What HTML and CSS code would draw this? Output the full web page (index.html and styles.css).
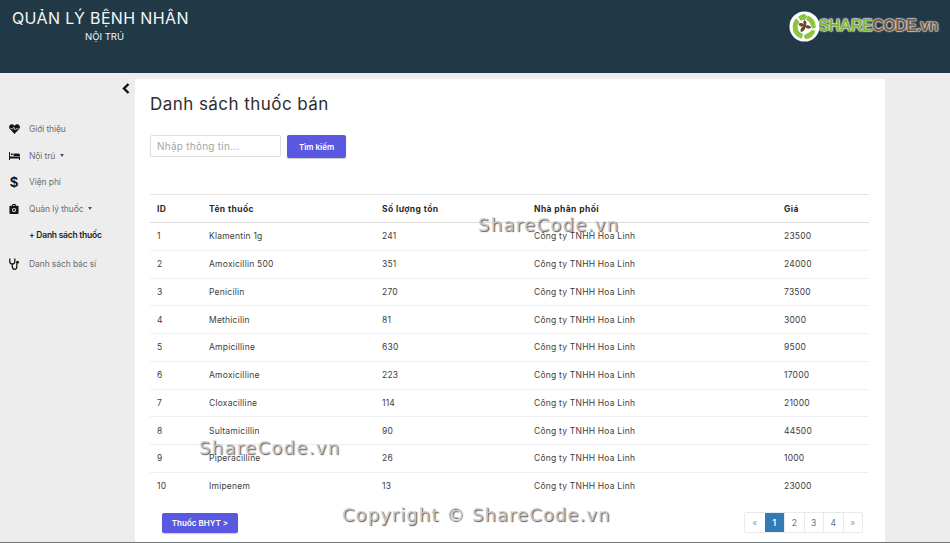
FILE: index.html
```html
<!DOCTYPE html>
<html lang="vi">
<head>
<meta charset="utf-8">
<title>Danh sách thuốc bán</title>
<link rel="stylesheet" href="styles.css">
</head>
<body>
<header class="topbar">
  <div class="brand">
    <div class="brand-title">QUẢN LÝ BỆNH NHÂN</div>
    <div class="brand-sub">NỘI TRÚ</div>
  </div>
  <div class="logo">
    <svg class="logo-mark" width="31" height="31" viewBox="0 0 34 34">
      <circle cx="17" cy="17" r="16.500" fill="#fff"/>
      <path d="M10 6.500A13 13 0 0 1 17 3l3 3-2 3.500a8 8 0 0 0-5 1.500z" fill="#8cc63f"/>
      <path d="M20.500 5a13 13 0 0 1 9 13l-4 1.500-2.500-6a8 8 0 0 0-4-3.500z" fill="#8cc63f"/>
      <path d="M29 22a13 13 0 0 1-11 9l-2-4 4-2.500a8 8 0 0 0 5-4z" fill="#8cc63f"/>
      <path d="M14 30.500A13 13 0 0 1 4 17a13 13 0 0 1 4-9l3.500 4a8 8 0 0 0-2 6 8 8 0 0 0 6 7z" fill="#8cc63f"/>
      <path d="M17 10c2.500 1.500 2.500 4 1.500 6 2.500-1 5-.5 6 2.500-2.500 1.500-5 1-6.500-1 0 3-2 5-5 5.500-1-2.500 0-5 2.500-6-2.500.5-4.500-.5-5-3 2.500-1.500 4.500-.5 6 1-1.500-2-1-3.500.5-5z" fill="#6b4a2c"/>
    </svg>
    <span class="logo-text"><span class="logo-share">SHARE</span><span class="logo-code">CODE.vn</span></span>
  </div>
</header>
<div class="layout">
  <aside class="sidebar">
    <div class="collapse-row">
      <svg width="8" height="11" viewBox="0 0 8 11"><path d="M6.500 1 2 5.500 6.500 10" fill="none" stroke="#111" stroke-width="2.400"/></svg>
    </div>
    <nav class="nav">
      <div class="nav-item">
        <svg class="nav-icon" width="11" height="10" viewBox="0 0 12 11"><path d="M6 11 .8 5.400C-.8 3.400.3.500 3 .3c1.300 0 2.300.7 3 1.700C6.700 1 7.700.3 9 .3c2.700.2 3.800 3.100 2.200 5.100z" fill="#151515"/><path d="M1.500 5.300h2.700l1-1.800 1.300 3 1-1.200h3" fill="none" stroke="#eee" stroke-width=".8"/></svg>
        <span>Giới thiệu</span>
      </div>
      <div class="nav-item">
        <svg class="nav-icon" width="11" height="8" viewBox="0 0 11 8"><path d="M0 0h1v4.500h10V8h-1V6.500H1V8H0zM1.800 2.200a1 1 0 1 1 2 0 1 1 0 0 1-2 0zM4.500 1.500h4.800A1.700 1.700 0 0 1 11 3.200V4H4.500z" fill="#151515"/></svg>
        <span>Nội trú</span><i class="caret"></i>
      </div>
      <div class="nav-item">
        <span class="nav-icon dollar">$</span>
        <span>Viện phí</span>
      </div>
      <div class="nav-item">
        <svg class="nav-icon" width="10" height="10" viewBox="0 0 10 11"><path d="M3 2V.8C3 .3 3.300 0 3.800 0h2.400c.5 0 .8.300.8.800V2h2c.6 0 1 .4 1 1v7c0 .6-.4 1-1 1H1c-.6 0-1-.4-1-1V3c0-.6.4-1 1-1zm1 0h2V1H4z" fill="#151515"/><circle cx="5" cy="6.500" r="2.200" fill="#eee"/><circle cx="5" cy="6.500" r="1.200" fill="#151515"/></svg>
        <span>Quản lý thuốc</span><i class="caret"></i>
      </div>
      <div class="nav-sub">+ Danh sách thuốc</div>
      <div class="nav-item nav-last">
        <svg class="nav-icon" width="11" height="12" viewBox="0 0 11 12"><path d="M.8.500v3C.8 5 2 6 3.300 6s2.500-1 2.500-2.500v-3M3.300 6v2.500c0 1.500 1 2.800 2.300 2.800s2.200-1.200 2.200-2.500V5.500" fill="none" stroke="#151515" stroke-width="1.300"/><circle cx="8.500" cy="4.200" r="1.500" fill="#151515"/></svg>
        <span>Danh sách bác sĩ</span>
      </div>
    </nav>
  </aside>
  <main class="card">
    <h1 class="title">Danh sách thuốc bán</h1>
    <form class="search">
      <input class="search-input" type="text" placeholder="Nhập thông tin...">
      <button class="btn btn-search" type="button">Tìm kiếm</button>
    </form>
    <table class="grid">
      <colgroup><col class="c-id"><col class="c-name"><col class="c-qty"><col class="c-dist"><col class="c-price"></colgroup>
      <thead><tr><th>ID</th><th>Tên thuốc</th><th>Số lượng tồn</th><th>Nhà phân phối</th><th>Giá</th></tr></thead>
      <tbody>
        <tr><td>1</td><td>Klamentin 1g</td><td>241</td><td>Công ty TNHH Hoa Linh</td><td>23500</td></tr>
        <tr><td>2</td><td>Amoxicillin 500</td><td>351</td><td>Công ty TNHH Hoa Linh</td><td>24000</td></tr>
        <tr><td>3</td><td>Penicilin</td><td>270</td><td>Công ty TNHH Hoa Linh</td><td>73500</td></tr>
        <tr><td>4</td><td>Methicilin</td><td>81</td><td>Công ty TNHH Hoa Linh</td><td>3000</td></tr>
        <tr><td>5</td><td>Ampicilline</td><td>630</td><td>Công ty TNHH Hoa Linh</td><td>9500</td></tr>
        <tr><td>6</td><td>Amoxicilline</td><td>223</td><td>Công ty TNHH Hoa Linh</td><td>17000</td></tr>
        <tr><td>7</td><td>Cloxacilline</td><td>114</td><td>Công ty TNHH Hoa Linh</td><td>21000</td></tr>
        <tr><td>8</td><td>Sultamicillin</td><td>90</td><td>Công ty TNHH Hoa Linh</td><td>44500</td></tr>
        <tr><td>9</td><td>Piperacilline</td><td>26</td><td>Công ty TNHH Hoa Linh</td><td>1000</td></tr>
        <tr><td>10</td><td>Imipenem</td><td>13</td><td>Công ty TNHH Hoa Linh</td><td>23000</td></tr>
      </tbody>
    </table>
    <div class="foot">
      <button class="btn btn-bhyt" type="button">Thuốc BHYT &gt;</button>
      <div class="pager">
        <a class="page muted">«</a><a class="page active">1</a><a class="page">2</a><a class="page">3</a><a class="page">4</a><a class="page muted">»</a>
      </div>
    </div>
  </main>
</div>
<div class="mark mark-a">ShareCode.vn</div>
<div class="mark mark-b">ShareCode.vn</div>
<div class="mark mark-c">Copyright © ShareCode.vn</div>
</body>
</html>
```
FILE: styles.css
```css
* { box-sizing: border-box; }
html, body { margin: 0; height: 543px; overflow: hidden; }
body {
  position: relative;
  background: #ededed;
  font-family: "Inter", "Noto Sans", sans-serif;
  color: #333;
  font-size: 8.500px;
  border-bottom: 1px solid #6f777a;
}
.topbar {
  height: 73px;
  background: #213946;
  display: flex;
  justify-content: space-between;
  padding: 9px 12px 0 12px;
}
.brand { color: #f4f6f7; width: 177px; }
.brand-title { font-size: 16px; line-height: 18px; letter-spacing: .35px; white-space: nowrap; }
.brand-sub { font-size: 9.500px; line-height: 12px; margin-top: 4px; margin-left: 73px; }
.logo { display: flex; align-items: center; height: 32px; margin-top: 1px; }
.logo-mark { margin-right: -1px; }
.logo-text { font-family: "Liberation Sans", sans-serif; font-weight: 700; font-size: 16px; letter-spacing: -.5px; -webkit-text-stroke: .3px #fff; paint-order: stroke; text-shadow: 0 0 2px #fff, 0 0 2px #fff; }
.logo-share { color: #7fb832; }
.logo-code { color: #7a5a3c; }
.layout { display: flex; height: 469px; padding-top: 6px; }
.sidebar { width: 135px; flex: none; color: #6d6d6d; letter-spacing: -.1px; }
.collapse-row { display: flex; justify-content: flex-end; padding: 4px 5px 0 0; height: 15px; }
.nav { padding-top: 22px; }
.nav-item { height: 26.500px; display: flex; align-items: center; padding-left: 29px; position: relative; }
.nav-last { margin-top: 2px; }
.nav-icon { position: absolute; left: 9px; top: 50%; transform: translateY(-50%); }
.dollar { color: #111; font-family: "Liberation Sans", sans-serif; font-weight: 700; font-size: 14.500px; letter-spacing: 0; left: 10px; }
.caret { display: inline-block; margin-left: 5px; border: 2.500px solid transparent; border-top: 3px solid #555; border-bottom: 0; }
.nav-sub { height: 26.500px; line-height: 26.500px; padding-left: 29px; color: #222; font-weight: 600; letter-spacing: -.25px; }
.card { width: 750px; background: #fff; padding: 15px 16px 0 15px; color: #333; }
.title { margin: 0; font-size: 17px; line-height: 20px; font-weight: 400; color: #2d2d2d; letter-spacing: .45px; }
.search { display: flex; gap: 6px; margin-top: 21px; height: 23px; }
.search-input { width: 131px; height: 22px; border: 1px solid #ddd; border-radius: 2px; padding: 0 6px; font: inherit; font-size: 10px; letter-spacing: .25px; outline: 0; }
.search-input::placeholder { color: #a5a5a5; opacity: 1; }
.btn { border: 0; border-radius: 2px; background: #5a58e0; color: #fff; font: inherit; font-weight: 600; font-size: 8px; box-shadow: 0 1px 1px rgba(0,0,0,.2); padding: 0; }
.btn-search { width: 59px; }
.grid { width: 719px; border-collapse: collapse; table-layout: fixed; margin-top: 36px; }
.c-id { width: 52px; } .c-name { width: 173px; } .c-qty { width: 152px; } .c-dist { width: 250px; } .c-price { width: 92px; }
.grid th, .grid td { padding: 0 7px; text-align: left; white-space: nowrap; }
.grid th { height: 28px; font-weight: 700; color: #2a2a2a; letter-spacing: .4px; border-top: 1px solid #e4e4e4; border-bottom: 1px solid #dcdcdc; }
.grid td { height: 27.750px; border-bottom: 1px solid #efefef; color: #3d3d3d; letter-spacing: .22px; }
.grid tbody tr:last-child td { border-bottom: 0; }
.foot { display: flex; justify-content: space-between; align-items: center; margin-top: 12px; padding: 0 6px 0 12px; }
.btn-bhyt { width: 76px; height: 20px; }
.pager { display: flex; height: 21px; border: 1px solid #eaeaea; border-radius: 2px; }
.page { width: 19.500px; display: flex; align-items: center; justify-content: center; color: #5b7186; border-left: 1px solid #eaeaea; }
.page:first-child { border-left: 0; }
.page.muted { color: #9aa5ae; }
.page.active { background: #337ab7; color: #fff; font-weight: 600; border-left: 0; }
.mark { position: absolute; font-family: "DejaVu Sans", sans-serif; white-space: nowrap; color: rgba(205,205,205,.9); text-shadow: 1px 1px 1px rgba(60,60,60,.85); pointer-events: none; font-size: 18px; }
.mark-a { left: 478px; top: 214px; letter-spacing: 1.300px; }
.mark-b { left: 199px; top: 437px; letter-spacing: 1.300px; }
.mark-c { left: 342px; top: 504px; letter-spacing: 1.050px; }
```
